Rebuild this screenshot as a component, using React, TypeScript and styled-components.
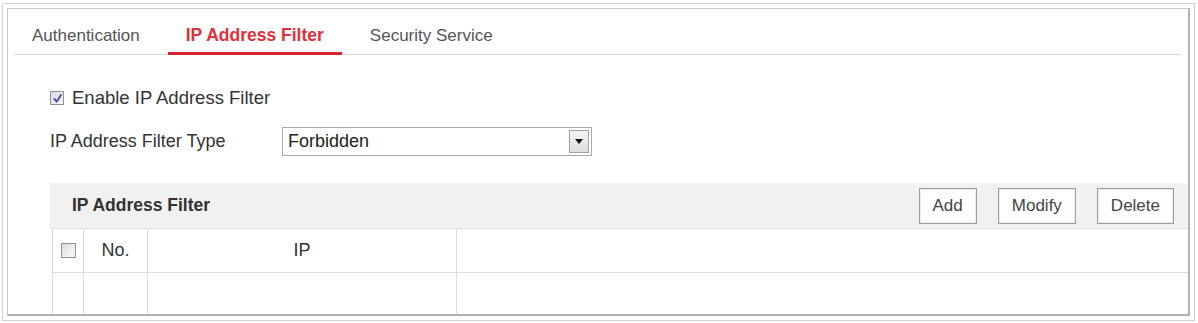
import React from "react";
import styled, { createGlobalStyle } from "styled-components";

const Global = createGlobalStyle`
  html, body { margin: 0; padding: 0; background: #ffffff; }
  body { font-family: "Liberation Sans", Arial, sans-serif; color: #333; }
  * { box-sizing: border-box; }
`;

const Outer = styled.div`
  margin: 3px 0 0 2px;
  width: 1193px;
  height: 318px;
  border: 1px solid #d2d2d2;
  padding: 4px;
`;

const Inner = styled.div`
  height: 100%;
  border-style: solid;
  border-color: #cacaca #b2b2b2 #b2b2b2 #cacaca;
  border-width: 1px 2px 2px 1px;
  overflow: hidden;
  display: flex;
  flex-direction: column;
`;

const TabBar = styled.div`
  display: flex;
  gap: 10px;
  height: 46px;
  margin: 0 6px;
  border-bottom: 1px solid #dcdcdc;
  flex-shrink: 0;
`;

const Tab = styled.div<{ $active?: boolean }>`
  height: 46px;
  margin-bottom: -1px;
  padding: 10px 18px 0;
  display: flex;
  align-items: center;
  font-size: ${(p) => (p.$active ? "17.5px" : "17px")};
  font-weight: ${(p) => (p.$active ? 700 : 400)};
  color: ${(p) => (p.$active ? "#e0313a" : "#555")};
  border-bottom: 3px solid ${(p) => (p.$active ? "#d7262e" : "transparent")};
`;

const Content = styled.div`
  padding: 31px 0 0 42px;
  display: flex;
  flex-direction: column;
`;

const CheckRow = styled.label`
  display: flex;
  align-items: center;
  height: 24px;
  gap: 8px;
  font-size: 18.5px;
  color: #333;
`;

const Box = styled.span<{ $checked?: boolean }>`
  width: ${(p) => (p.$checked ? "14px" : "15px")};
  height: ${(p) => (p.$checked ? "14px" : "15px")};
  border: 1px solid #8f9194;
  background: ${(p) =>
    p.$checked
      ? "linear-gradient(135deg, #d6dbe9 0%, #e9ecf5 60%, #f4f5fa 100%)"
      : "linear-gradient(135deg, #dcdcdc 0%, #eeeeee 60%, #f7f7f7 100%)"};
  display: inline-flex;
  align-items: center;
  justify-content: center;
  flex-shrink: 0;
`;

const FieldRow = styled.div`
  display: flex;
  align-items: center;
  margin-top: 16px;
  height: 30px;
`;

const Label = styled.div`
  width: 232px;
  font-size: 18px;
  color: #333;
`;

const Select = styled.div`
  width: 310px;
  height: 29px;
  border: 1px solid #a7a7a7;
  display: flex;
  align-items: center;
  justify-content: space-between;
  padding: 0 2px 0 5px;
  font-size: 18px;
  color: #222;
`;

const DropButton = styled.span`
  width: 20px;
  height: 23px;
  border: 1px solid #a3a3a3;
  background: linear-gradient(#f4f4f4, #dedede);
  display: flex;
  align-items: center;
  justify-content: center;
`;

const Panel = styled.div`
  margin-top: 27px;
  display: flex;
  flex-direction: column;
`;

const PanelHeader = styled.div`
  height: 46px;
  background: #f1f1f1;
  border-bottom: 1px solid #e2e2e2;
  display: flex;
  align-items: center;
  padding: 0 14px 0 22px;
`;

const PanelTitle = styled.div`
  flex: 1;
  font-size: 17.5px;
  font-weight: 700;
  color: #333;
`;

const Buttons = styled.div`
  display: flex;
  gap: 21px;
`;

const Button = styled.button`
  height: 36px;
  padding: 0 13px;
  background: #fff;
  border: 1px solid #9d9d9d;
  box-shadow: inset 0 0 0 1px #ececec;
  font-family: "Liberation Sans", Arial, sans-serif;
  font-size: 17px;
  color: #444;
`;

const Grid = styled.div`
  display: grid;
  grid-template-columns: 31px 64px 309px 1fr;
  border-left: 1px solid #dcdcdc;
  margin-left: 2px;
`;

const Cell = styled.div<{ $last?: boolean }>`
  height: 44px;
  display: flex;
  align-items: center;
  justify-content: center;
  border-bottom: 1px solid #dcdcdc;
  border-right: ${(p) => (p.$last ? "none" : "1px solid #dcdcdc")};
  font-size: 18px;
  color: #333;
`;

const Check = () => (
  <svg width="11" height="11" viewBox="0 0 12 12">
    <path d="M2.5 6.5 L5 9.5 L9.8 2.2" fill="none" stroke="#3a4d9c" strokeWidth="2" strokeLinecap="round" strokeLinejoin="round" />
  </svg>
);

const Caret = () => (
  <svg width="8" height="5" viewBox="0 0 8 5">
    <path d="M0 0 H8 L4 5 Z" fill="#111" />
  </svg>
);

export default function App() {
  return (
    <>
      <Global />
      <Outer>
        <Inner>
          <TabBar>
            <Tab>Authentication</Tab>
            <Tab $active>IP Address Filter</Tab>
            <Tab>Security Service</Tab>
          </TabBar>
          <Content>
            <CheckRow>
              <Box $checked>
                <Check />
              </Box>
              Enable IP Address Filter
            </CheckRow>
            <FieldRow>
              <Label>IP Address Filter Type</Label>
              <Select>
                <span>Forbidden</span>
                <DropButton>
                  <Caret />
                </DropButton>
              </Select>
            </FieldRow>
            <Panel>
              <PanelHeader>
                <PanelTitle>IP Address Filter</PanelTitle>
                <Buttons>
                  <Button>Add</Button>
                  <Button>Modify</Button>
                  <Button>Delete</Button>
                </Buttons>
              </PanelHeader>
              <Grid>
                <Cell>
                  <Box />
                </Cell>
                <Cell>No.</Cell>
                <Cell>IP</Cell>
                <Cell $last />
                <Cell />
                <Cell />
                <Cell />
                <Cell $last />
              </Grid>
            </Panel>
          </Content>
        </Inner>
      </Outer>
    </>
  );
}
